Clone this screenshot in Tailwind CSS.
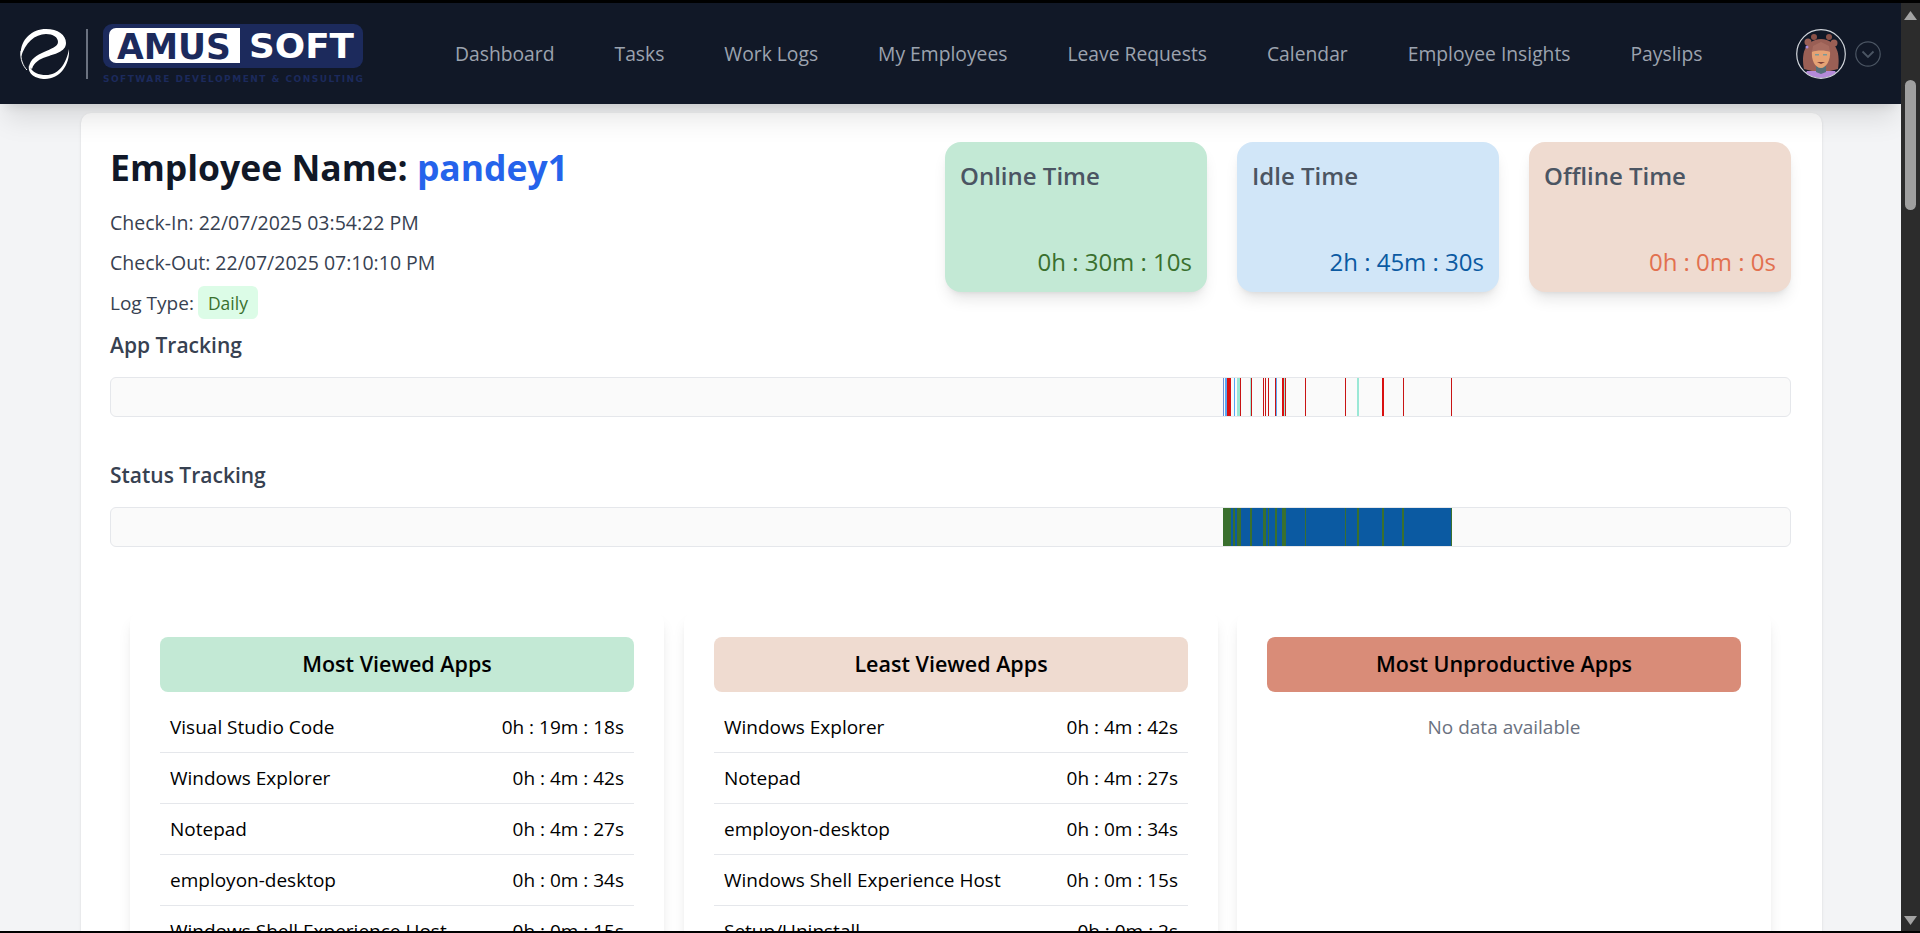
<!DOCTYPE html>
<html lang="en">
<head>
<meta charset="utf-8">
<title>Employee Details</title>
<script src="https://cdn.jsdelivr.net/npm/@tailwindcss/browser@4"></script>
</head>
<body class="bg-black font-['Open_Sans',sans-serif] overflow-hidden">
<div class="h-[933px] pt-[3px] pb-[2px] overflow-hidden">
<div class="flex h-[928px] overflow-hidden">
    <div class="w-[1901px] h-full bg-[#f3f4f6] overflow-hidden">
        <!-- Navbar -->
        <header class="relative z-10 h-[101px] bg-[#111827] shadow-xl flex items-center">
            <svg class="ml-5 w-[50px] h-[50px] shrink-0" viewBox="0 0 50 50" fill="none">
                <path d="M1 28C-1 12 11 0 26 0C38 0 46 6 46 14C46 23 34 25 26 28C20 30 14 33 12 40L9 38C10 30 17 26 24 23C30 20 38 18 38 13C38 8 33 5 26 5C15 5 5 14 1 28Z" fill="#fff"/>
                <path d="M9 36C12 44 19 46 26 46C38 46 46 36 49 20C50 36 40 50 25 50C16 50 7 45 9 36Z" fill="#fff"/>
                <path d="M1 22C0 30 3 37 7 41" stroke="#fff" stroke-width="1"/>
            </svg>
            <div class="ml-4 w-[2px] h-[50px] bg-[#6b7280] shrink-0"></div>
            <svg class="ml-[15px] w-[262px] h-[64px] mt-[5px] shrink-0" viewBox="0 0 262 64">
                <rect x="0" y="0" width="260" height="44" rx="9" fill="#1c2a5c"/>
                <path d="M13 4H137V39H13A7 7 0 0 1 6 32V11A7 7 0 0 1 13 4Z" fill="#fff"/>
                <text x="14" y="35" textLength="114" lengthAdjust="spacingAndGlyphs" font-family="DejaVu Sans" font-weight="700" font-size="36" fill="#1c2a5c">AMUS</text>
                <text x="146" y="34" textLength="105" lengthAdjust="spacingAndGlyphs" font-family="DejaVu Sans" font-weight="700" font-size="33" fill="#fff">SOFT</text>
                <text x="0" y="58" textLength="260" lengthAdjust="spacing" font-family="DejaVu Sans" font-weight="700" font-size="9" fill="#1c2a5c">SOFTWARE DEVELOPMENT &amp; CONSULTING</text>
            </svg>
            <nav class="ml-[90px] flex gap-[60px] text-[19.3px] leading-7 font-medium text-[#9ca3af] whitespace-nowrap">
                <a href="#">Dashboard</a>
                <a href="#">Tasks</a>
                <a href="#">Work Logs</a>
                <a href="#">My Employees</a>
                <a href="#">Leave Requests</a>
                <a href="#">Calendar</a>
                <a href="#">Employee Insights</a>
                <a href="#">Payslips</a>
            </nav>
            <div class="ml-auto mr-[20px] flex items-center gap-[9px]">
                <svg class="w-[50px] h-[50px]" viewBox="0 0 50 50">
                    <clipPath id="avatarClip"><circle cx="25" cy="25" r="24"/></clipPath>
                    <g clip-path="url(#avatarClip)">
                        <rect width="50" height="50" fill="#111827"/>
                        <circle cx="18" cy="8" r="3" fill="#8a5148"/>
                        <circle cx="33" cy="8" r="3" fill="#8a5148"/>
                        <circle cx="12" cy="13" r="3.5" fill="#9a5f55"/>
                        <circle cx="38" cy="14" r="3.5" fill="#9a5f55"/>
                        <path d="M8 40C5 26 8 11 25 10C42 11 44 26 42 40L34 42H16Z" fill="#9a5f55"/>
                        <path d="M11 42H39L44 50H6Z" fill="#b48ad9"/>
                        <path d="M20 37H30V43L25 45L20 43Z" fill="#56707a"/>
                        <path d="M16 22C20 19 30 19 34 22C35 31 30 39 25 39C19 39 15 31 16 22Z" fill="#e6a274"/>
                        <path d="M16 23C20 21 30 21 34 23L33 17L25 13L17 17Z" fill="#a86c60"/>
                        <rect x="19" y="25" width="4" height="1.5" fill="#7a9a9a"/>
                        <rect x="27" y="25" width="4" height="1.5" fill="#7a9a9a"/>
                        <path d="M21 33H29L25 35Z" fill="#7d3f38"/>
                        <circle cx="11" cy="18" r="1.5" fill="#a78bdb"/>
                    </g>
                    <circle cx="25" cy="25" r="24.3" fill="none" stroke="#d1d5db" stroke-width="1.2"/>
                </svg>
                <svg class="w-[26px] h-[26px]" viewBox="0 0 26 26" fill="none" stroke="#4b5563" stroke-width="1.2">
                    <circle cx="13" cy="13" r="12.2"/>
                    <path d="M7.5 10.5L13 16L18.5 10.5" stroke-width="1.8"/>
                </svg>
            </div>
        </header>

        <!-- Main card -->
        <main class="ml-[81px] mt-[9px] w-[1741px] bg-white rounded-[10px] shadow-sm pl-[29px] pr-[31px] pt-[29px] pb-10">
            <div class="flex justify-between items-start">
                <div>
                    <h1 class="mt-[5px] text-[35.5px] leading-10 font-bold text-[#111827]">Employee Name: <span class="text-[#2563eb]">pandey1</span></h1>
                    <p class="mt-[22px] text-[19.5px] leading-7 text-[#374151]">Check-In: <span class="font-medium">22/07/2025 03:54:22 PM</span></p>
                    <p class="mt-3 text-[19.5px] leading-7 text-[#374151]">Check-Out: <span class="font-medium">22/07/2025 07:10:10 PM</span></p>
                    <p class="mt-[9px] flex items-center gap-1 text-[19px] leading-7 text-[#374151]">Log Type:
                        <span class="h-[33px] px-[10px] flex items-center rounded-md bg-[#dcfce7] text-[#3a702e] text-[17.5px] font-medium">Daily</span>
                    </p>
                </div>
                <div class="flex gap-[30px]">
                    <div class="w-[262px] h-[150px] rounded-2xl bg-[#c3e9d5] shadow-lg px-[15px] pt-[18px] pb-[14px] flex flex-col justify-between">
                        <h3 class="text-[24px] leading-8 font-semibold text-[#4b5563]">Online Time</h3>
                        <p class="text-[24px] leading-8 text-right text-[#3a702e]">0h : 30m : 10s</p>
                    </div>
                    <div class="w-[262px] h-[150px] rounded-2xl bg-[#d1e6f8] shadow-lg px-[15px] pt-[18px] pb-[14px] flex flex-col justify-between">
                        <h3 class="text-[24px] leading-8 font-semibold text-[#4b5563]">Idle Time</h3>
                        <p class="text-[24px] leading-8 text-right text-[#0b5aa2]">2h : 45m : 30s</p>
                    </div>
                    <div class="w-[262px] h-[150px] rounded-2xl bg-[#efdbd0] shadow-lg px-[15px] pt-[18px] pb-[14px] flex flex-col justify-between">
                        <h3 class="text-[24px] leading-8 font-semibold text-[#4b5563]">Offline Time</h3>
                        <p class="text-[24px] leading-8 text-right text-[#e2704f]">0h : 0m : 0s</p>
                    </div>
                </div>
            </div>

            <!-- App tracking -->
            <h2 class="mt-[12px] text-[21px] leading-7 font-semibold text-[#374151]">App Tracking</h2>
            <div class="relative mt-[18px] h-10 w-[1681px] bg-[#fafafa] border border-[#e5e7eb] rounded-md overflow-hidden">
                <span class="absolute inset-y-0 bg-[#6a8fd8]" style="left:1112px;width:1px"></span>
                <span class="absolute inset-y-0 bg-[#5aa7f5]" style="left:1114px;width:2px"></span>
                <span class="absolute inset-y-0 bg-[#d91010]" style="left:1116px;width:4px"></span>
                <span class="absolute inset-y-0 bg-[#5aa7f5]" style="left:1123px;width:1px"></span>
                <span class="absolute inset-y-0 bg-[#9be8d6]" style="left:1126px;width:3px"></span>
                <span class="absolute inset-y-0 bg-[#c81414]" style="left:1129px;width:1px"></span>
                <span class="absolute inset-y-0 bg-[#9be8d6]" style="left:1139px;width:1px"></span>
                <span class="absolute inset-y-0 bg-[#c81414]" style="left:1140px;width:1px"></span>
                <span class="absolute inset-y-0 bg-[#c81414]" style="left:1152px;width:1px"></span>
                <span class="absolute inset-y-0 bg-[#c81414]" style="left:1154px;width:1px"></span>
                <span class="absolute inset-y-0 bg-[#c81414]" style="left:1157px;width:1px"></span>
                <span class="absolute inset-y-0 bg-[#c81414]" style="left:1164px;width:1px"></span>
                <span class="absolute inset-y-0 bg-[#5aa7f5]" style="left:1165px;width:1px"></span>
                <span class="absolute inset-y-0 bg-[#d91010]" style="left:1171px;width:2px"></span>
                <span class="absolute inset-y-0 bg-[#9be8d6]" style="left:1173px;width:1px"></span>
                <span class="absolute inset-y-0 bg-[#c81414]" style="left:1174px;width:1px"></span>
                <span class="absolute inset-y-0 bg-[#c81414]" style="left:1194px;width:1px"></span>
                <span class="absolute inset-y-0 bg-[#c81414]" style="left:1234px;width:1px"></span>
                <span class="absolute inset-y-0 bg-[#9be8d6]" style="left:1246px;width:2px"></span>
                <span class="absolute inset-y-0 bg-[#d91010]" style="left:1271px;width:2px"></span>
                <span class="absolute inset-y-0 bg-[#c81414]" style="left:1292px;width:1px"></span>
                <span class="absolute inset-y-0 bg-[#c81414]" style="left:1340px;width:1px"></span>
            </div>

            <!-- Status tracking -->
            <h2 class="mt-[44px] text-[21px] leading-7 font-semibold text-[#374151]">Status Tracking</h2>
            <div class="relative mt-[18px] h-10 w-[1681px] bg-[#fafafa] border border-[#e5e7eb] rounded-md overflow-hidden">
                <span class="absolute inset-y-0 bg-[#0b5aa2]" style="left:1112px;width:229px"></span>
                <span class="absolute inset-y-0 bg-[#3a702e]" style="left:1112px;width:8px"></span>
                <span class="absolute inset-y-0 bg-[#3a702e]" style="left:1122px;width:2px"></span>
                <span class="absolute inset-y-0 bg-[#3a702e]" style="left:1126px;width:4px"></span>
                <span class="absolute inset-y-0 bg-[#3a702e]" style="left:1139px;width:2px"></span>
                <span class="absolute inset-y-0 bg-[#3a702e]" style="left:1152px;width:3px"></span>
                <span class="absolute inset-y-0 bg-[#3a702e]" style="left:1157px;width:1px"></span>
                <span class="absolute inset-y-0 bg-[#3a702e]" style="left:1164px;width:2px"></span>
                <span class="absolute inset-y-0 bg-[#3a702e]" style="left:1171px;width:4px"></span>
                <span class="absolute inset-y-0 bg-[#3a702e]" style="left:1194px;width:1px"></span>
                <span class="absolute inset-y-0 bg-[#3a702e]" style="left:1234px;width:1px"></span>
                <span class="absolute inset-y-0 bg-[#3a702e]" style="left:1246px;width:2px"></span>
                <span class="absolute inset-y-0 bg-[#3a702e]" style="left:1271px;width:2px"></span>
                <span class="absolute inset-y-0 bg-[#3a702e]" style="left:1291px;width:2px"></span>
                <span class="absolute inset-y-0 bg-[#3a702e]" style="left:1340px;width:1px"></span>
            </div>

            <!-- App lists -->
            <div class="mt-[65px] ml-5 flex gap-5">
                <section class="w-[534px] h-[400px] bg-white rounded-[10px] shadow-lg px-[30px] pt-[25px]">
                    <h3 class="h-[55px] flex items-center justify-center rounded-lg bg-[#c3e9d5] text-[21.5px] font-semibold text-black">Most Viewed Apps</h3>
                    <ul class="mt-[10px] text-[19px] text-black">
                        <li class="h-[51px] px-[10px] flex items-center justify-between border-b border-[#e5e7eb]"><span>Visual Studio Code</span><span>0h : 19m : 18s</span></li>
                        <li class="h-[51px] px-[10px] flex items-center justify-between border-b border-[#e5e7eb]"><span>Windows Explorer</span><span>0h : 4m : 42s</span></li>
                        <li class="h-[51px] px-[10px] flex items-center justify-between border-b border-[#e5e7eb]"><span>Notepad</span><span>0h : 4m : 27s</span></li>
                        <li class="h-[51px] px-[10px] flex items-center justify-between border-b border-[#e5e7eb]"><span>employon-desktop</span><span>0h : 0m : 34s</span></li>
                        <li class="h-[51px] px-[10px] flex items-center justify-between border-b border-[#e5e7eb]"><span>Windows Shell Experience Host</span><span>0h : 0m : 15s</span></li>
                    </ul>
                </section>
                <section class="w-[534px] h-[400px] bg-white rounded-[10px] shadow-lg px-[30px] pt-[25px]">
                    <h3 class="h-[55px] flex items-center justify-center rounded-lg bg-[#efdbd0] text-[21.5px] font-semibold text-black">Least Viewed Apps</h3>
                    <ul class="mt-[10px] text-[19px] text-black">
                        <li class="h-[51px] px-[10px] flex items-center justify-between border-b border-[#e5e7eb]"><span>Windows Explorer</span><span>0h : 4m : 42s</span></li>
                        <li class="h-[51px] px-[10px] flex items-center justify-between border-b border-[#e5e7eb]"><span>Notepad</span><span>0h : 4m : 27s</span></li>
                        <li class="h-[51px] px-[10px] flex items-center justify-between border-b border-[#e5e7eb]"><span>employon-desktop</span><span>0h : 0m : 34s</span></li>
                        <li class="h-[51px] px-[10px] flex items-center justify-between border-b border-[#e5e7eb]"><span>Windows Shell Experience Host</span><span>0h : 0m : 15s</span></li>
                        <li class="h-[51px] px-[10px] flex items-center justify-between border-b border-[#e5e7eb]"><span>Setup/Uninstall</span><span>0h : 0m : 2s</span></li>
                    </ul>
                </section>
                <section class="-ml-px w-[534px] h-[400px] bg-white rounded-[10px] shadow-lg px-[30px] pt-[25px]">
                    <h3 class="h-[55px] flex items-center justify-center rounded-lg bg-[#d98c78] text-[21.5px] font-semibold text-black">Most Unproductive Apps</h3>
                    <p class="mt-[21px] text-center text-[19px] leading-7 text-[#6b7280]">No data available</p>
                </section>
            </div>
        </main>
    </div>

    <!-- Scrollbar -->
    <div class="w-[19px] h-full bg-[#2c2c2c] flex flex-col items-center pt-2 pb-[6px]">
        <svg class="w-[13px] h-[9px]" viewBox="0 0 13 9"><path d="M6.5 0L13 9H0Z" fill="#a3a3a3"/></svg>
        <div class="mt-[60px] w-[11px] h-[130px] rounded-full bg-[#9f9f9f]"></div>
        <svg class="mt-auto w-[13px] h-[9px]" viewBox="0 0 13 9"><path d="M0 0H13L6.5 9Z" fill="#a3a3a3"/></svg>
    </div>
</div>
</div>
</body>
</html>
